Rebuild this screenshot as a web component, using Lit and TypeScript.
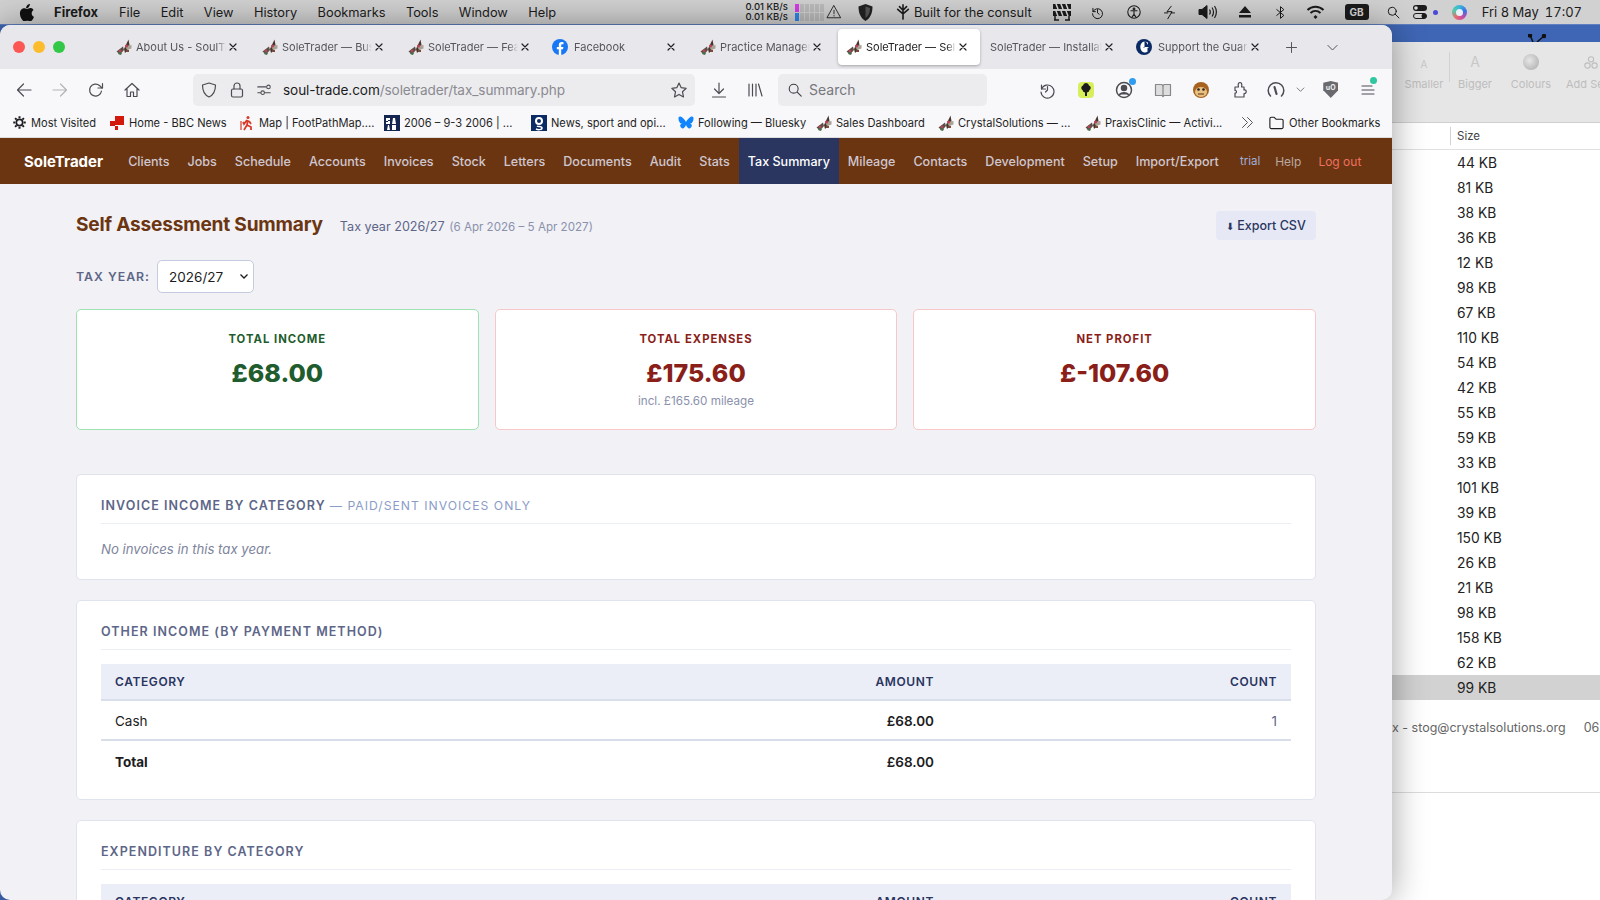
import { LitElement, html, css, svg } from "lit";
import { customElement } from "lit/decorators.js";

// little moth favicon the app uses on its tabs and bookmarks
const moth = (cls = "fav") => html`<svg class=${cls} viewBox="0 0 16 16">
  <path d="M0.500 12.500 L7 7.500 L8 11 L4 15.500 Z" fill="#5c5046" />
  <path d="M8 10 L12.500 0.500 L13.500 6 L12 11 L9 14 Z" fill="#47352c" />
  <path d="M9 7 L15.500 6 L15.500 9.500 L11 11 Z" fill="#aaa294" />
  <circle cx="10.500" cy="7" r="1.500" fill="#b8405a" />
  <circle cx="4" cy="12" r="1.400" fill="#b8405a" />
  <path d="M3 13 L6 14 L5 16 L2 15 Z" fill="#47704a" />
  <path d="M10 11 L13 11 L13 13 L10 13 Z" fill="#7a4a3a" />
</svg>`;

const fbIcon = html`<svg class="fav brand-ic" viewBox="0 0 16 16">
  <circle cx="8" cy="8" r="8" fill="#1877f2" />
  <path d="M11 10.300 11.400 8H9.200V6.500c0-.7.3-1.200 1.300-1.200h1V3.300s-.9-.2-1.800-.2C7.900 3.100 6.800 4.300 6.800 6.200V8h-2v2.300h2V16h2.400v-5.700Z" fill="#fff" />
</svg>`;

const guardianIcon = html`<svg class="fav brand-ic" viewBox="0 0 16 16">
  <circle cx="8" cy="8" r="8" fill="#0b2a63" />
  <path d="M8.500 2.600C6 2.800 4.300 5 4.300 8s1.700 5.200 4.200 5.400V8.700H7.500V8h5v.7h-1v4c-.8.500-1.600.8-2.400.9h-.6ZM9.200 2.400c1 .1 2 .5 2.800 1.200v1.800h-.4C11 3.900 10.200 3 9.200 2.800Z" fill="#fff" />
</svg>`;

const ic = (body: unknown, w = 18, sw = 1.2) => html`<svg class="ic" width=${w} height=${w} viewBox="0 0 18 18" fill="none" stroke="currentColor" stroke-width=${sw} stroke-linecap="round" stroke-linejoin="round">${body}</svg>`;

const icons = {
  back: svg`<path d="M16 9H2.500M8.500 3 2.500 9l6 6" />`,
  forward: svg`<path d="M2 9h13.500M9.500 3l6 6-6 6" />`,
  reload: svg`<path d="M14.500 10a6 6 0 1 1-1.800-5.300L15 7" /><path d="M15.500 2.500V7H11" />`,
  home: svg`<path d="M2 9 9 2.500 16 9M4 7.500V15.500h3.500V11h3v4.500H14V7.500" />`,
  shield: svg`<path d="M9 2 15.500 4C15.500 10 13.500 14 9 16 4.500 14 2.500 10 2.500 4Z" />`,
  lock: svg`<rect x="3.500" y="8" width="11" height="8" rx="1.500" /><path d="M6 8V5a3 3 0 0 1 6 0v3" />`,
  sliders: svg`<path d="M2 5.500h9M2 12h3" /><circle cx="14" cy="5.500" r="2" /><circle cx="7.500" cy="12" r="2" /><path d="M10 12h6" />`,
  star: svg`<path d="M9 2l2.200 4.700 5 .6-3.700 3.500 1 5.100L9 13.400 4.500 15.900l1-5.100L1.800 7.300l5-.6Z" />`,
  download: svg`<path d="M9 2v10M4.500 8 9 12.500 13.500 8M2.500 16h13" />`,
  library: svg`<path d="M3 3v12M6.500 3v12M10 3v12M12.500 3 16 15" />`,
  search: svg`<circle cx="7.500" cy="7.500" r="5" /><path d="m11.500 11.500 4.500 4.500" />`,
  history: svg`<path d="M3.500 4v4h4" /><path d="M3.500 8A6.500 6.500 0 1 1 3 11" /><path d="M9.500 5.500V9l-2 2" />`,
  reader: svg`<path d="M1.500 3.500H8L9 5l1-1.500h6.500v11H10L9 15.500 8 14.500H1.500Z" fill="#ddd" stroke="#888" /><path d="M9 5v10" stroke="#888" />`,
  puzzle: svg`<path d="M4 6h3.500c-1-3 .4-4.500 1.500-4.500S11.500 3 10.500 6H13v3c3-.9 3 4 0 3.500v3.500H4v-4c2 .8 2-3 0-2.500Z" />`,
  gauge: svg`<path d="M3.500 15A7.800 7.800 0 1 1 14.500 15" stroke-width="1.500" /><path d="M7.500 6l2 7" stroke-width="2.200" />`,
  menu: svg`<path d="M3 5h10M3 9h12M3 13h12" />`,
  folder: svg`<path d="M2 5a1.500 1.500 0 0 1 1.500-1.500h3L8.500 5.500h6A1.500 1.500 0 0 1 16 7v7a1.500 1.500 0 0 1-1.500 1.500h-11A1.500 1.500 0 0 1 2 14Z" />`,
  plus: svg`<path d="M9 3v12M3 9h12" />`,
  chevron: svg`<path d="M3.500 6.500 9 12l5.500-5.500" />`,
  dbl: svg`<path d="M3 3l6 6-6 6M9 3l6 6-6 6" />`,
  x: svg`<path d="M4.500 4.500l9 9M13.500 4.500l-9 9" />`,
  warn: svg`<path d="M9 2 16.500 15.500h-15Z" /><path d="M9 7v4M9 13v.5" />`,
  clock: svg`<path d="M3.500 4v4h3" /><path d="M3.500 8A6 6 0 1 1 3 10.500" /><path d="M9 5.500V9.500l2 1.500" />`,
  person: svg`<circle cx="9" cy="9" r="7" /><circle cx="9" cy="5.500" r="1" /><path d="M5.500 7.500h7M9 8v3.500M7 14.500l2-3 2 3" />`,
  bolt: svg`<path d="M11 1.500 6 8h6l-5 8.500M3 9.500h4M11 9.500h4" />`,
  bt: svg`<path d="M4.500 5.500 13 12.500 9 16V2l4 3.500-8.500 7" />`,
  glass: svg`<circle cx="7.500" cy="7.500" r="4.800" /><path d="m11 11 4.500 4.500" />`,
};

const moths = (t: string) => ({ icon: moth(), t });
const tabs = [
  { ...moths("About Us - SoulTrader") },
  { ...moths("SoleTrader — Business") },
  { ...moths("SoleTrader — Features") },
  { icon: fbIcon, t: "Facebook" },
  { ...moths("Practice Manager") },
  { ...moths("SoleTrader — Self Assessment"), active: true },
  { icon: null, t: "SoleTrader — Installation" },
  { icon: guardianIcon, t: "Support the Guardian" },
];

const bbc = html`<svg class="fav" viewBox="0 0 16 16"><path d="M6 1h9v9H6Z" fill="#d3190c" /><path d="M1 6h5v5H1Z" fill="#d3190c" /><path d="M6 11h3v4H6Z" fill="#d3190c" /></svg>`;
const mapIc = html`<svg class="fav" viewBox="0 0 16 16" fill="none" stroke="#d83a2a" stroke-width="1.800"><circle cx="9" cy="2.500" r="1.500" fill="#d83a2a" stroke="none" /><path d="M9 5 8 10 5 15M8 10l4 2v3M8 5 5 9 4 7M10 6l2 3" /><path d="M2 6v9" stroke-width="1.200" /></svg>`;
const saab = html`<svg class="fav" viewBox="0 0 16 16"><rect width="16" height="16" fill="#14264f" /><path d="M2 3h4v2H4v1h2v3H2V7h2V6H2ZM8 9l1-6h2l1 6Z" fill="#fff" /><path d="M3 15l1-5h1l1 5ZM8 10h4v5H8Z" fill="#fff" /></svg>`;
const gIc = html`<svg class="fav" viewBox="0 0 16 16"><rect width="16" height="16" fill="#0b2a63" /><circle cx="8" cy="6" r="3" fill="none" stroke="#fff" stroke-width="2" /><path d="M5 14c2 1 6 1 6-1s-4-1-5-2" fill="none" stroke="#fff" stroke-width="1.500" /></svg>`;
const blueskyIc = html`<svg class="fav" viewBox="0 0 16 16"><path d="M8 7C7 5 4.500 2 2.500 1.500 1 1.200.5 2 .5 3.500c0 2 1 5 3.500 5.300C2 9 1.500 11 3 12.500c2 2 3.500.5 5-2.500 1.500 3 3 4.500 5 2.500 1.500-1.500 1-3.500-1-3.700 2.500-.3 3.500-3.300 3.500-5.300 0-1.500-.5-2.300-2-2C11.500 2 9 5 8 7Z" fill="#1185fe" /></svg>`;

const gear = ic(svg`<circle cx="9" cy="9" r="3.800" stroke-width="2" /><path d="M9 1.500v2.500M9 14v2.500M1.500 9H4M14 9h2.500M3.700 3.700l1.800 1.800M12.500 12.500l1.800 1.800M3.700 14.300l1.800-1.800M12.500 5.500l1.800-1.800" stroke-width="2.400" stroke-linecap="butt" />`, 15, 1.500);

const bookmarks = [
  { icon: gear, t: "Most Visited", w: 97 },
  { icon: bbc, t: "Home - BBC News", w: 130 },
  { icon: mapIc, t: "Map | FootPathMap....", w: 145 },
  { icon: saab, t: "2006 – 9-3 2006 | ...", w: 147 },
  { icon: gIc, t: "News, sport and opi...", w: 147 },
  { icon: blueskyIc, t: "Following — Bluesky", w: 138 },
  { icon: moth(), t: "Sales Dashboard", w: 122 },
  { icon: moth(), t: "CrystalSolutions — ...", w: 147 },
  { icon: moth(), t: "PraxisClinic — Activi...", w: 148 },
];

const navItems = ["Clients", "Jobs", "Schedule", "Accounts", "Invoices", "Stock", "Letters", "Documents", "Audit", "Stats", "Tax Summary", "Mileage", "Contacts", "Development", "Setup", "Import/Export"];
const sizes = ["44", "81", "38", "36", "12", "98", "67", "110", "54", "42", "55", "59", "33", "101", "39", "150", "26", "21", "98", "158", "62", "99"];
const macMenu = ["File", "Edit", "View", "History", "Bookmarks", "Tools", "Window", "Help"];

@customElement("app-root")
export class AppRoot extends LitElement {
  static styles = css`
    :host {
      display: block;
      position: relative;
      width: 1600px;
      height: 900px;
      overflow: hidden;
      font-family: Inter, "Liberation Sans", sans-serif;
      background: #3f66b5;
    }
    svg { display: block; flex: none; }

    /* mac menu bar */
    .menubar {
      height: 24px;
      background: #d1d1d1;
      display: flex;
      align-items: center;
      font-size: 12.800px;
      color: #1c1c1c;
      border-bottom: 1px solid #5f7fbe;
      box-sizing: content-box;
    }
    .apple { margin-left: 19px; margin-right: 20px; width: 15px; height: 17px; }
    .menubar b { font-weight: 700; margin-right: 21px; font-size: 13px; }
    .menu-items { display: flex; gap: 20.400px; }
    .status { margin-left: auto; display: flex; align-items: center; padding-right: 18px; color: #1c1c1c; }
    .speed { font-size: 9.500px; line-height: 10px; width: 49px; text-align: right; font-weight: 500; margin-right: 7px; }
    .bars { display: grid; grid-template-columns: repeat(6, 4px); grid-template-rows: 8px 8px; gap: 1px; margin-right: -8px; }
    .bars i { background: #bcbcbc; }
    .bars i.p { background: #d83ae8; }
    .bars i.b { background: #2f86e8; }
    .slot { width: 36px; display: flex; justify-content: center; align-items: center; }
    .slot.shield-ic { margin-left: -4px; margin-right: 11px; }
    .slot.wide { width: 38px; }
    .slot.narrow { width: 34px; }
    .slot.bolt-ic { margin-right: 2px; }
    .built { display: flex; align-items: center; gap: 3px; margin: 0 12px 0 0; font-size: 12.800px; }
    .gb { background: #1c1c1c; color: #d8d8d8; font-size: 10px; font-weight: 700; width: 24px; height: 16px; border-radius: 3px; display: grid; place-items: center; margin: 0 17px 0 11px; }
    .toggle { margin-left: 11px; }
    .dot { width: 5px; height: 5px; border-radius: 50%; background: #4a4ad8; margin: 0 4px 0 5px; }
    .siri { width: 15px; height: 15px; border-radius: 50%; background: conic-gradient(#3ab8d8, #3a70e8, #c84aa8, #e86a6a, #58c8a8, #3ab8d8); margin: 0 0 0 10px; position: relative; }
    .siri::after { content: ""; position: absolute; inset: 4px; border-radius: 50%; background: #e8f2f8; }
    .clock-text { margin-left: 15px; display: flex; gap: 6px; font-size: 13px; font-variant-numeric: tabular-nums; }

    /* window behind the browser */
    .rear {
      position: absolute;
      left: 1300px;
      top: 42px;
      width: 300px;
      height: 858px;
      background: #fff;
    }
    .antenna { position: absolute; left: 1528px; top: 34px; width: 18px; height: 8px; color: #111; }
    .rear-bar {
      height: 81px;
      background: #e6e6e6;
      border-bottom: 1px solid #cfcfcf;
      padding-left: 99px;
      display: flex;
      gap: 0;
      color: #bdbdbd;
      font-size: 11px;
      box-sizing: border-box;
    }
    .tool { display: flex; flex-direction: column; align-items: center; justify-content: flex-end; height: 49px; width: 50px; flex: none; gap: 7px; }
    .tool.sep { border-right: 1px solid #d2d2d2; height: 30px; width: 0; margin-top: 10px; }
    .tool span.a { font-size: 10px; color: #c8c8c8; }
    .tool span.a.big { font-size: 14px; }
    .ball { width: 16px; height: 16px; border-radius: 50%; background: radial-gradient(circle at 40% 40%, #e6e6e6, #a8a8a8); }
    .tool.w { width: 62px; }
    .tool.add { align-items: flex-start; width: 40px; margin-left: 4px; }
    .tool.add svg { margin-left: 17px; }
    .rear-head { height: 27px; border-bottom: 1px solid #e0e0e0; display: flex; align-items: center; padding-left: 150px; font-size: 11.500px; color: #444; box-sizing: border-box; position: relative; }
    .rear-head::before { content: ""; position: absolute; left: 150px; top: 4px; bottom: 4px; border-left: 1px solid #d4d4d4; }
    .rear-head span { margin-left: 7px; }
    .size-row { height: 25px; display: flex; align-items: center; padding-left: 157px; font-size: 13.800px; color: #222; }
    .size-row.sel { background: #d2d2d2; }
    .rear-foot { height: 93px; border-bottom: 1px solid #dcdcdc; padding: 20px 0 0 92px; font-size: 12.500px; color: #666; white-space: nowrap; box-sizing: border-box; }
    .rear-foot span { margin-left: 18px; }

    /* browser window */
    .window {
      position: absolute;
      left: 0;
      top: 25px;
      width: 1392px;
      height: 875px;
      border-radius: 10px;
      overflow: hidden;
      background: #f1f1f6;
      box-shadow: 0 0 34px rgba(0, 0, 0, 0.38);
      display: flex;
      flex-direction: column;
    }
    .tabstrip { height: 44px; background: #e8e8ec; display: flex; align-items: center; padding-left: 13px; flex: none; }
    .lights { display: flex; gap: 8px; width: 93px; flex: none; }
    .lights i { width: 12px; height: 12px; border-radius: 50%; }
    .tab { width: 142px; height: 36px; margin: 0 2px; box-sizing: border-box; flex: none; display: flex; align-items: center; padding: 0 11px 0 8px; font-size: 11px; color: #55555c; position: relative; }
    .tab.active { background: #fff; color: #1e1e22; border-radius: 4px; box-shadow: 0 1px 3px rgba(0, 0, 0, 0.3); }
    .tab.noicon { padding-left: 2px; }
    .tab .label { flex: 1; min-width: 0; white-space: nowrap; overflow: hidden; margin-left: 4px; -webkit-mask-image: linear-gradient(90deg, #000 90%, transparent 100%); mask-image: linear-gradient(90deg, #000 90%, transparent 100%); }
    .tab .x { color: #222; margin-left: 1px; }
    .fav { width: 16px; height: 16px; flex: none; }
    .fav.brand-ic { margin-left: -2px; margin-right: 2px; }
    .strip-end { display: flex; align-items: center; gap: 26px; margin-left: 10px; color: #55555c; }

    .toolbar { height: 41px; background: #f8f8fb; display: flex; align-items: center; flex: none; color: #4c4c52; }
    .navbtns { display: flex; width: 193px; padding-left: 15px; box-sizing: border-box; gap: 18px; flex: none; }
    .navbtns .off { color: #b4b4b8; }
    .url { width: 502px; height: 32px; background: #ececef; border-radius: 5px; display: flex; align-items: center; padding: 0 7px 0 7px; box-sizing: border-box; flex: none; gap: 10px; }
    .url .addr { flex: 1; font-size: 13.600px; color: #8a8a8f; margin-left: 1px; letter-spacing: -0.1px; white-space: nowrap; }
    .url .addr b { font-weight: 400; color: #1c1c1e; }
    .mid { display: flex; gap: 18px; margin-left: 15px; width: 68px; flex: none; }
    .search { width: 209px; height: 32px; background: #ececef; border-radius: 5px; display: flex; align-items: center; gap: 6px; padding-left: 9px; box-sizing: border-box; font-size: 14px; color: #77777c; flex: none; }
    .search svg { color: #3a3a40; }
    .exts { display: flex; align-items: center; margin-left: 41px; }
    .exts > div { width: 38.500px; display: flex; justify-content: center; position: relative; flex: none; }
    .exts .gauge-slot { margin-left: -2px; }
    .exts .small { width: 20px; margin-left: -5px; margin-right: 1px; }
    .exts .menu-slot { margin-left: -1px; }
    .badge { position: absolute; width: 7px; height: 7px; border-radius: 50%; top: -3px; right: 8px; }
    .menu-slot .badge { right: 11px; top: -4px; }
    .cloud { width: 16px; height: 16px; background: #d8ee5a; border-radius: 4px; display: grid; place-items: center; }
    .cloud svg { width: 12px; height: 13px; }
    .ubo { width: 15px; height: 17px; background: #6a6a6e; clip-path: polygon(0 10%, 50% 0, 100% 10%, 100% 55%, 50% 100%, 0 55%); color: #eee; font-size: 7px; font-weight: 700; text-align: center; line-height: 14px; }

    .bookmarks { height: 28px; background: #f8f8fb; display: flex; align-items: center; padding: 0 0 2px 12px; box-sizing: border-box; font-size: 11.100px; color: #1f1f23; flex: none; border-bottom: 1px solid #ddd; }
    .bm { display: flex; align-items: center; gap: 4px; white-space: nowrap; flex: none; }
    .more { margin-left: 7px; margin-right: 13px; color: #55555c; }

    /* the page itself */
    .nav { height: 46px; background: #6b3511; display: flex; align-items: center; padding-left: 24px; flex: none; font-size: 12.550px; font-weight: 500; color: #cfc7d0; }
    .brand { color: #fff; font-weight: 700; font-size: 15px; margin-right: 16px; }
    .nav a { padding: 0 9px; height: 46px; display: flex; align-items: center; }
    .nav a.on { background: #2a3560; color: #fff; }
    .nav .trial { color: #9fb0d8; font-size: 11.500px; font-weight: 400; padding-left: 12px; padding-right: 6px; }
    .nav .help { color: #b8a8a0; font-weight: 400; font-size: 12px; padding-right: 8px; }
    .nav .logout { color: #f07060; font-weight: 400; font-size: 12px; }

    main { padding: 27px 76px 0; display: flex; flex-direction: column; }
    .head { display: flex; align-items: center; justify-content: space-between; height: 29px; }
    .title { display: flex; align-items: baseline; gap: 17px; margin-bottom: 4px; }
    h1 { margin: 0; font-size: 19.100px; font-weight: 700; color: #6b3511; letter-spacing: -0.2px; }
    .sub { font-size: 12.600px; color: #5d6688; }
    .sub small { font-size: 11.600px; color: #8b91ab; margin-left: 1px; }
    .export { background: #e6e9f5; color: #2a3560; font-size: 12.500px; font-weight: 500; width: 100px; height: 29px; border-radius: 4px; display: flex; align-items: center; justify-content: center; gap: 3px; }
    .export i { font-style: normal; font-size: 10px; }

    .year { display: flex; align-items: center; gap: 7px; margin-top: 20px; height: 33px; }
    .year label { font-size: 12.300px; font-weight: 600; letter-spacing: 1px; color: #5d6688; }
    .picker { position: relative; }
    select { display: block; appearance: none; -webkit-appearance: none; width: 97px; height: 33px; border: 1px solid #c4cbe0; border-radius: 5px; background: #fff; font: inherit; font-size: 13.500px; padding-left: 11px; color: #1c1c22; }
    .picker svg { position: absolute; right: 5px; top: 11px; color: #1c1c22; pointer-events: none; }

    .cards { display: grid; grid-template-columns: repeat(3, 1fr); gap: 16px; margin-top: 16px; }
    .card { height: 121px; background: #fff; border-radius: 5px; border: 1px solid #f6c8c8; box-sizing: border-box; text-align: center; padding-top: 22px; }
    .card.green { border-color: #9fe2b2; }
    .card h3 { margin: 0; font-size: 11.300px; font-weight: 700; letter-spacing: 1px; color: #8a1f1a; line-height: 14px; }
    .card .v { font-size: 25px; font-weight: 800; color: #8a1f1a; line-height: 34px; margin-top: 10px; }
    .card.green h3, .card.green .v { color: #1f5c2e; }
    .card p { margin: 3px 0 0; font-size: 11.700px; color: #8b91ab; line-height: 16px; }

    section { background: #fff; border: 1px solid #dfe3ee; border-radius: 5px; margin-top: 20px; padding: 0 24px; box-sizing: border-box; }
    section.first { margin-top: 44px; height: 106px; }
    section.other { height: 200px; }
    section h2 { margin: 0; font-size: 12.500px; font-weight: 600; letter-spacing: 1.050px; color: #5d6688; text-transform: uppercase; height: 49px; padding-top: 23px; line-height: 16px; box-sizing: border-box; border-bottom: 1px solid #eceef5; }
    section h2 span { font-weight: 400; font-size: 12.200px; letter-spacing: 1px; color: #8a9cc8; }
    .empty { font-style: italic; font-size: 13.200px; color: #7e849c; margin: 17px 0 0; }

    table { width: 100%; border-collapse: collapse; table-layout: fixed; margin-top: 14px; font-size: 13.500px; color: #1c1c22; }
    th { background: #ebeef7; color: #2a3560; font-size: 12px; font-weight: 600; letter-spacing: 0.6px; height: 35px; padding: 0 14px; text-align: left; border-bottom: 2px solid #d9deeb; }
    td { height: 40px; padding: 2px 14px 0; border-bottom: 2px solid #d9deeb; box-sizing: border-box; }
    .r { text-align: right; }
    .c3 { width: 343px; box-sizing: border-box; }
    .c2 { width: 240px; box-sizing: border-box; }
    td.num { font-weight: 600; }
    td.count { color: #5d6688; }
    tr.total td { font-weight: 700; border-bottom: none; }
    tr.total td.num { font-weight: 600; }
  `;

  renderMenubar() {
    return html`<div class="menubar">
      <svg class="apple" viewBox="0 0 16 18"><path d="M11.600 0c.1 1.200-.4 2.300-1.100 3.100-.7.900-1.900 1.500-3 1.400-.1-1.100.4-2.300 1.100-3.100C9.300.6 10.600 0 11.600 0ZM15.500 6.200c-.1.100-2 1.200-2 3.600 0 2.800 2.400 3.800 2.500 3.800 0 .1-.4 1.400-1.300 2.700-.8 1.100-1.600 2.200-2.800 2.200s-1.600-.7-3-.7-1.800.7-3 .7-2-1-2.900-2.300C1.900 14.700 1 12.300 1 10c0-3.700 2.400-5.600 4.700-5.600 1.200 0 2.300.8 3 .8s1.900-.9 3.300-.9c.5 0 2.400.1 3.500 1.900Z" fill="#111" /></svg>
      <b>Firefox</b>
      <div class="menu-items">${macMenu.map((m) => html`<span>${m}</span>`)}</div>
      <div class="status">
        <div class="speed">0.01 KB/s<br />0.01 KB/s</div>
        <div class="bars">
          <i class="p"></i><i></i><i></i><i></i><i></i><i></i>
          <i class="b"></i><i></i><i></i><i></i><i></i><i></i>
        </div>
        <div class="slot">${ic(icons.warn, 16, 1)}</div>
        <div class="slot shield-ic"><svg width="15" height="17" viewBox="0 0 15 17"><path d="M7.500 0 14.500 2.500C14.500 9 12.500 14 7.500 17 2.500 14 .5 9 .5 2.500Z" fill="#222" /><path d="M7.500 2.500 12 4C12 8.500 10.500 12 7.500 14Z" fill="#555" /></svg></div>
        <div class="built">
          ${ic(svg`<path d="M9 1v16M3 6l6 5 6-5M5 3l4 4 4-4" stroke-width="1.800" />`, 16)}
          <span>Built for the consult</span>
        </div>
        <div class="slot"><svg width="20" height="18" viewBox="0 0 20 18"><rect x="1" y="1" width="18" height="5" fill="#1c1c1c" /><rect x="1" y="8" width="18" height="5" fill="#1c1c1c" /><path d="M3 13v4M17 13v4M2 17h5M13 17h5" stroke="#1c1c1c" stroke-width="1.500" /><path d="M4 1l2 5M9 1l2 5M14 1l2 5M4 8l2 5M9 8l2 5M14 8l2 5" stroke="#ddd" stroke-width="1.500" /></svg></div>
        <div class="slot">${ic(icons.clock, 15)}</div>
        <div class="slot">${ic(icons.person, 16)}</div>
        <div class="slot bolt-ic">${ic(icons.bolt, 15)}</div>
        <div class="slot"><svg width="20" height="16" viewBox="0 0 20 16" fill="none" stroke="#1c1c1c"><path d="M1 5.500h3L9 1.500v13L4 10.500H1Z" fill="#1c1c1c" /><path d="M11.500 5.500c1 1.500 1 3.500 0 5M14 3.500c2 2.500 2 6.500 0 9M16.500 2c2.500 3.500 2.500 8.500 0 12" stroke-width="1.200" /></svg></div>
        <div class="slot wide"><svg width="14" height="12" viewBox="0 0 14 12"><path d="M7 0l6 7H1Z M1 9h12v2.500H1Z" fill="#1c1c1c" /></svg></div>
        <div class="slot narrow">${ic(icons.bt, 15)}</div>
        <div class="slot"><svg width="19" height="14" viewBox="0 0 19 14" fill="none" stroke="#1c1c1c" stroke-width="2"><path d="M1.500 5c4.500-4.500 11.500-4.500 16 0M4.500 8c3-2.700 7-2.700 10 0" /><path d="M9.500 10l2 2-2 2-2-2Z" fill="#1c1c1c" stroke="none" /></svg></div>
        <div class="gb">GB</div>
        ${ic(icons.glass, 15)}
        <svg class="toggle" width="16" height="16" viewBox="0 0 16 16"><rect x="1" y="1" width="14" height="6" rx="3" fill="#1c1c1c" /><circle cx="4" cy="4" r="1.800" fill="#ddd" /><rect x="1.500" y="9.500" width="13" height="5" rx="2.500" fill="none" stroke="#1c1c1c" /><circle cx="12" cy="12" r="2.500" fill="#1c1c1c" /></svg>
        <div class="dot"></div>
        <div class="siri"></div>
        <div class="clock-text"><span>Fri 8 May</span><span>17:07</span></div>
      </div>
    </div>`;
  }

  renderRear() {
    return html`
      <svg class="antenna" viewBox="0 0 18 8" fill="none" stroke="currentColor" stroke-width="1.500"><path d="M2 1l3 7M16 2 9 8" /><circle cx="2" cy="1.500" r="1.500" fill="currentColor" /><circle cx="16" cy="2" r="1.500" fill="currentColor" /></svg>
      <div class="rear">
        <div class="rear-bar">
          <div class="tool"><span class="a">A</span><span>Smaller</span></div>
          <div class="tool sep"></div>
          <div class="tool"><span class="a big">A</span><span>Bigger</span></div>
          <div class="tool w"><div class="ball"></div><span>Colours</span></div>
          <div class="tool add">${ic(svg`<circle cx="9" cy="6" r="3" /><circle cx="5" cy="13" r="3" /><circle cx="13" cy="13" r="3" />`, 16)}<span>Add Se</span></div>
        </div>
        <div class="rear-head"><span>Size</span></div>
        ${sizes.map((s, i) => html`<div class="size-row ${i === sizes.length - 1 ? "sel" : ""}">${s} KB</div>`)}
        <div class="rear-foot">x - stog@crystalsolutions.org<span>06</span></div>
      </div>`;
  }

  renderChrome() {
    return html`
      <div class="tabstrip">
        <div class="lights"><i style="background:#fc5753"></i><i style="background:#fdbc2e"></i><i style="background:#33c748"></i></div>
        ${tabs.map((t) => html`<div class="tab ${t.active ? "active" : ""} ${t.icon ? "" : "noicon"}">
          ${t.icon}
          <span class="label">${t.t}</span>
          <span class="x">${ic(icons.x, 12, 1.800)}</span>
        </div>`)}
        <div class="strip-end">${ic(icons.plus, 15)}${ic(icons.chevron, 15)}</div>
      </div>
      <div class="toolbar">
        <div class="navbtns">
          ${ic(icons.back)}
          <span class="off">${ic(icons.forward)}</span>
          ${ic(icons.reload)}
          ${ic(icons.home)}
        </div>
        <div class="url">
          ${ic(icons.shield)}${ic(icons.lock)}${ic(icons.sliders, 16)}
          <div class="addr"><b>soul-trade.com</b>/soletrader/tax_summary.php</div>
          ${ic(icons.star)}
        </div>
        <div class="mid">${ic(icons.download)}${ic(icons.library)}</div>
        <div class="search">${ic(icons.search, 16)}Search</div>
        <div class="exts">
          <div>${ic(icons.history)}</div>
          <div><div class="cloud"><svg viewBox="0 0 12 13"><path d="M6 0a3 3 0 0 1 3 2.500 2.500 2.500 0 0 1 .5 4.500A3 3 0 0 1 7 9.500V13H5V9.500A3 3 0 0 1 2.500 7 2.500 2.500 0 0 1 3 2.500 3 3 0 0 1 6 0Z" fill="#1c1c1c" /></svg></div></div>
          <div>${ic(svg`<circle cx="9" cy="9" r="7.500" /><circle cx="9" cy="7" r="2.500" fill="currentColor" /><path d="M4.500 13.500c2-2.500 7-2.500 9 0" fill="currentColor" />`, 18, 1.500)}<span class="badge" style="background:#2f9cf0"></span></div>
          <div>${ic(icons.reader)}</div>
          <div><svg width="18" height="18" viewBox="0 0 18 18"><circle cx="9" cy="9" r="8" fill="#a8611f" /><ellipse cx="9" cy="11" rx="6" ry="5" fill="#e8c080" /><circle cx="6.500" cy="8.500" r="1.300" fill="#222" /><circle cx="11.500" cy="8.500" r="1.300" fill="#222" /><path d="M6 13h6" stroke="#5a3010" /></svg></div>
          <div>${ic(icons.puzzle)}</div>
          <div class="gauge-slot">${ic(icons.gauge)}</div>
          <div class="small">${ic(icons.chevron, 11)}</div>
          <div><div class="ubo">uO</div></div>
          <div class="menu-slot">${ic(icons.menu)}<span class="badge" style="background:#2fc7a0"></span></div>
        </div>
      </div>
      <div class="bookmarks">
        ${bookmarks.map((b) => html`<div class="bm" style="width:${b.w}px">${b.icon}<span>${b.t}</span></div>`)}
        <div class="more">${ic(icons.dbl, 15)}</div>
        <div class="bm">${ic(icons.folder, 17)}<span>Other Bookmarks</span></div>
      </div>`;
  }

  renderPage() {
    return html`
      <nav class="nav">
        <span class="brand">SoleTrader</span>
        ${navItems.map((n) => html`<a class=${n === "Tax Summary" ? "on" : ""}>${n}</a>`)}
        <a class="trial">trial</a>
        <a class="help">Help</a>
        <a class="logout">Log out</a>
      </nav>
      <main>
        <div class="head">
          <div class="title">
            <h1>Self Assessment Summary</h1>
            <span class="sub">Tax year 2026/27 <small>(6 Apr 2026 – 5 Apr 2027)</small></span>
          </div>
          <div class="export"><i>⬇</i>Export CSV</div>
        </div>
        <div class="year">
          <label>TAX YEAR:</label>
          <div class="picker">
            <select><option>2026/27</option></select>
            <svg width="10" height="10" viewBox="0 0 10 10" fill="none" stroke="currentColor" stroke-width="1.300"><path d="M1.500 3.500 5 7l3.500-3.500" /></svg>
          </div>
        </div>
        <div class="cards">
          <div class="card green"><h3>TOTAL INCOME</h3><div class="v">£68.00</div></div>
          <div class="card"><h3>TOTAL EXPENSES</h3><div class="v">£175.60</div><p>incl. £165.60 mileage</p></div>
          <div class="card"><h3>NET PROFIT</h3><div class="v">£-107.60</div></div>
        </div>
        <section class="first">
          <h2>Invoice Income by Category <span>— Paid/Sent invoices only</span></h2>
          <p class="empty">No invoices in this tax year.</p>
        </section>
        <section class="other">
          <h2>Other Income (by payment method)</h2>
          <table>
            <thead><tr><th>CATEGORY</th><th class="r c2">AMOUNT</th><th class="r c3">COUNT</th></tr></thead>
            <tbody>
              <tr><td>Cash</td><td class="r num">£68.00</td><td class="r count">1</td></tr>
              <tr class="total"><td>Total</td><td class="r num">£68.00</td><td></td></tr>
            </tbody>
          </table>
        </section>
        <section>
          <h2>Expenditure by Category</h2>
          <table>
            <thead><tr><th>CATEGORY</th><th class="r c2">AMOUNT</th><th class="r c3">COUNT</th></tr></thead>
          </table>
        </section>
      </main>`;
  }

  render() {
    return html`
      ${this.renderMenubar()}
      ${this.renderRear()}
      <div class="window">
        ${this.renderChrome()}
        ${this.renderPage()}
      </div>
    `;
  }
}
